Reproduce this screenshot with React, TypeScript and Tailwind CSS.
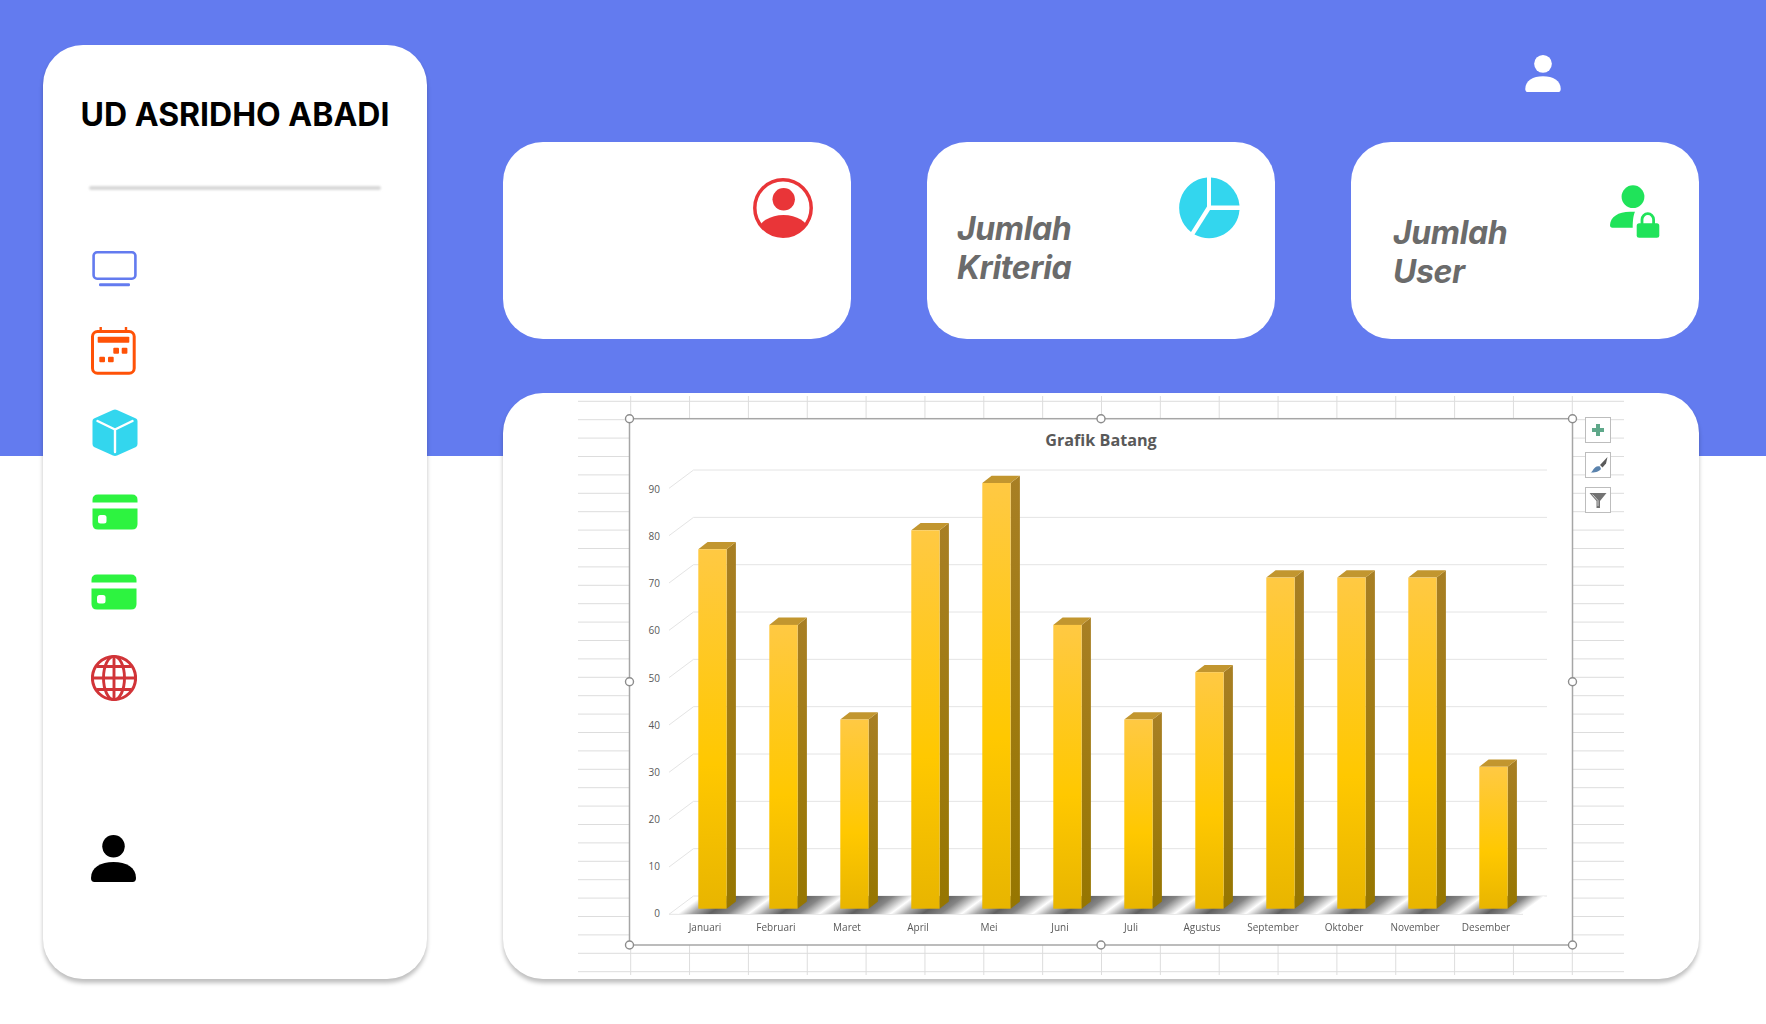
import React from 'react';

const months = [
  { name: 'Januari', value: 76 },
  { name: 'Februari', value: 60 },
  { name: 'Maret', value: 40 },
  { name: 'April', value: 80 },
  { name: 'Mei', value: 90 },
  { name: 'Juni', value: 60 },
  { name: 'Juli', value: 40 },
  { name: 'Agustus', value: 50 },
  { name: 'September', value: 70 },
  { name: 'Oktober', value: 70 },
  { name: 'November', value: 70 },
  { name: 'Desember', value: 30 },
];

const MonitorIcon = () => (
  <svg width="46" height="36" viewBox="0 0 46 36" fill="none" className="block">
    <rect x="2.600" y="1.300" width="41.800" height="26.400" rx="3.500" stroke="#637bef" strokeWidth="2.600" />
    <rect x="8" y="32.200" width="31" height="3" rx="1.200" fill="#637bef" />
  </svg>
);

const CalendarIcon = () => (
  <svg width="46" height="48" viewBox="0 0 46 48" fill="none" className="block">
    <path d="M9.700 0 v4 M35 0 v4" stroke="#ff5207" strokeWidth="2.400" />
    <rect x="1.500" y="4.500" width="41.700" height="41.700" rx="5" stroke="#ff5207" strokeWidth="3" />
    <rect x="6.700" y="9.700" width="31.600" height="6" rx="0.800" fill="#ff5207" />
    <rect x="22.300" y="20.700" width="5.700" height="6" rx="1" fill="#ff5207" />
    <rect x="30.700" y="20.700" width="5.700" height="6" rx="1" fill="#ff5207" />
    <rect x="8.300" y="29.700" width="5.700" height="5.500" rx="1" fill="#ff5207" />
    <rect x="17" y="29.700" width="5.700" height="5.500" rx="1" fill="#ff5207" />
  </svg>
);

const CubeIcon = () => (
  <svg width="46" height="48" viewBox="0 0 46 48" className="block">
    <path d="M21 1 Q23 0 25 1 L44 9.500 Q45.500 10.200 45.500 12 V35 Q45.500 37 44 38 L25 46.600 Q23 47.500 21 46.600 L2 38 Q0.500 37 0.500 35 V12 Q0.500 10.200 2 9.500 Z" fill="#33d6ee" />
    <path d="M5.500 12 L23 20.500 L40.500 12 M23 20.500 V43" fill="none" stroke="#fff" strokeWidth="2.400" strokeLinecap="round" strokeLinejoin="round" />
  </svg>
);

const CreditCardIcon = () => (
  <svg width="46" height="36" viewBox="0 0 46 36" className="block">
    <path d="M0.500 8.500 V6 Q0.500 0.500 6 0.500 H40 Q45.500 0.500 45.500 6 V8.500 Z" fill="#2df340" />
    <path d="M0.500 14.500 H45.500 V30 Q45.500 35.500 40 35.500 H6 Q0.500 35.500 0.500 30 Z" fill="#2df340" />
    <rect x="6" y="21" width="8.500" height="8.500" rx="2.500" fill="#fff" />
  </svg>
);

const GlobeIcon = () => (
  <svg width="46" height="48" viewBox="0 0 46 48" fill="none" stroke="#d13438" strokeWidth="2.900" className="block">
    <circle cx="23" cy="24" r="21.600" strokeWidth="3" />
    <ellipse cx="23" cy="24" rx="10.500" ry="21.600" />
    <path d="M23 2.400 V45.600 M1.400 24 H44.600 M5.500 12.500 H40.500 M5.500 35.500 H40.500" />
  </svg>
);

const PersonIcon = ({ color, width, height }: { color: string; width: number; height: number }) => (
  <svg width={width} height={height} viewBox="0 0 46 48" className="block">
    <circle cx="23" cy="11.500" r="11.500" fill={color} />
    <path d="M0 44 C0 33 10 27.500 23 27.500 C36 27.500 46 33 46 44 Q46 48 42.500 48 H3.500 Q0 48 0 44 Z" fill={color} />
  </svg>
);

const UserCircleIcon = () => (
  <svg width="60" height="60" viewBox="0 0 60 60" className="block">
    <defs>
      <clipPath id="ring">
        <circle cx="30" cy="30" r="28" />
      </clipPath>
    </defs>
    <circle cx="30" cy="30" r="28.200" fill="#fff" stroke="#e93538" strokeWidth="3.500" />
    <circle cx="30.700" cy="21.300" r="11.200" fill="#e93538" />
    <ellipse cx="30.500" cy="52" rx="24.500" ry="15" fill="#e93538" clipPath="url(#ring)" />
  </svg>
);

const PieIcon = () => (
  <svg width="62" height="62" viewBox="0 0 62 62" className="block">
    <path d="M29 0.500 V29.500 L13 55 A30.500 30.500 0 0 1 29 0.500 Z" fill="#33d6ee" />
    <path d="M33 0.500 A30.500 30.500 0 0 1 61.500 28.500 H33 Z" fill="#33d6ee" />
    <path d="M32 33 H61.500 A30.500 30.500 0 0 1 16.500 57.500 Z" fill="#33d6ee" />
  </svg>
);

const UserLockIcon = () => (
  <svg width="50" height="54" viewBox="0 0 50 54" className="block">
    <circle cx="23" cy="11.700" r="11.400" fill="#20e35a" />
    <path d="M0 40 C0.500 32 8 26.700 20 26.700 H25 C23.500 30 22.700 35 22.700 42.700 H2.500 Q0 42.700 0 40 Z" fill="#20e35a" />
    <path d="M32 39 V34.500 A5.800 5.800 0 0 1 43.600 34.500 V39" fill="none" stroke="#20e35a" strokeWidth="2.800" />
    <rect x="26.700" y="38.300" width="22.600" height="14.400" rx="2.500" fill="#20e35a" />
  </svg>
);

const frontTop = (value: number) => 908.7 - value * 4.73;

const ChartPicture = () => {
  const gridRows = Array.from({ length: 32 }, (_, i) => 401.3 + i * 18.4);
  const gridCols = Array.from({ length: 17 }, (_, i) => 630.7 + i * 58.85);
  const ticks = Array.from({ length: 10 }, (_, i) => i);

  return (
    <svg width="1196" height="586" viewBox="503 393 1196 586" className="block blur-[0.4px]" fontFamily="'Open Sans', sans-serif">
      <defs>
        <linearGradient id="front" x1="0" y1="0" x2="0" y2="1">
          <stop offset="0" stopColor="#ffc943" />
          <stop offset="0.6" stopColor="#ffc800" />
          <stop offset="1" stopColor="#e8b500" />
        </linearGradient>
        <linearGradient id="side" x1="0" y1="0" x2="0" y2="1">
          <stop offset="0" stopColor="#a87f24" />
          <stop offset="1" stopColor="#967600" />
        </linearGradient>
        <linearGradient id="floorShadow" x1="0" y1="0" x2="1" y2="0">
          <stop offset="0" stopColor="#ffffff" />
          <stop offset="0.2" stopColor="#a8a8a8" />
          <stop offset="0.45" stopColor="#606060" />
          <stop offset="0.7" stopColor="#858585" />
          <stop offset="1" stopColor="#ffffff" />
        </linearGradient>
      </defs>

      {/* sheet behind the chart */}
      {gridRows.map((y) => (
        <line key={y} x1="578" x2="1624" y1={y} y2={y} stroke="#dddddd" strokeWidth="1" />
      ))}
      {gridCols.map((x) => (
        <line key={x} x1={x} x2={x} y1="396" y2="975" stroke="#dddddd" strokeWidth="1" />
      ))}

      <rect x="629.500" y="418.700" width="943" height="526.300" fill="#fff" stroke="#a6a6a6" strokeWidth="1.500" />

      <text x="1101" y="445.500" textAnchor="middle" fontSize="16.200" fontWeight="700" fill="#595959">Grafik Batang</text>

      {ticks.map((t) => {
        const back = 896 - t * 47.33;
        return (
          <g key={t}>
            {t > 0 && <path d={`M669 ${back + 18.300} L693.500 ${back} H1547`} fill="none" stroke="#e4e4e4" strokeWidth="1" />}
            <text x="660" y={917 - t * 47.1} textAnchor="end" fontSize="10" fill="#595959">{t * 10}</text>
          </g>
        );
      })}

      {/* floor */}
      <path d="M669 914.300 L693.500 896 H1547" fill="none" stroke="#e4e4e4" strokeWidth="1" />
      <path d="M669 914.300 H1523" fill="none" stroke="#e4e4e4" strokeWidth="1" />
      {months.map((m, i) => {
        const x = 698.300 + i * 71;
        return (
          <g key={m.name} transform={`translate(${x - 21} 914) skewX(-53.700)`}>
            <rect x="0" y="-18" width={i === 11 ? 62 : 71} height="18" fill="url(#floorShadow)" />
          </g>
        );
      })}

      {months.map((m, i) => {
        const x = 698.300 + i * 71;
        const top = frontTop(m.value);
        return (
          <g key={m.name}>
            <path d={`M${x + 28.300} ${top} L${x + 37.600} ${top - 7.300} V901.400 L${x + 28.300} 908.700 Z`} fill="url(#side)" />
            <path d={`M${x} ${top} L${x + 9.300} ${top - 7.300} H${x + 37.600} L${x + 28.300} ${top} Z`} fill="#c2962f" />
            <rect x={x} y={top} width="28.300" height={908.700 - top} fill="url(#front)" />
            <text x={705 + i * 71} y="930.500" textAnchor="middle" fontSize="10" fill="#595959">{m.name}</text>
          </g>
        );
      })}

      {/* selection handles */}
      {[
        [629.500, 418.700], [1101, 418.700], [1572.500, 418.700],
        [629.500, 681.800], [1572.500, 681.800],
        [629.500, 945], [1101, 945], [1572.500, 945],
      ].map(([cx, cy]) => (
        <circle key={`${cx}-${cy}`} cx={cx} cy={cy} r="4" fill="#fff" stroke="#8c8c8c" strokeWidth="1.400" />
      ))}

      {/* chart side buttons */}
      <rect x="1585.500" y="417.500" width="25" height="25" fill="#fff" stroke="#bdbdbd" />
      <path d="M1598 424 V436 M1592 430 H1604" stroke="#5fa88a" strokeWidth="4" />
      <rect x="1585.500" y="452.500" width="25" height="25" fill="#fff" stroke="#bdbdbd" />
      <path d="M1600 465 L1607.500 457 L1606 463.500 L1602.500 467.500 Z" fill="#5a5a5a" />
      <path d="M1590.500 472.500 C1593 472 1594 464.500 1600 466.500 L1601 469 C1599 472 1594 472.500 1590.500 472.500 Z" fill="#5a83ad" />
      <rect x="1585.500" y="487.500" width="25" height="25" fill="#fff" stroke="#bdbdbd" />
      <path d="M1589.500 493 H1606.500 L1600 501 V508 H1596.500 V501 Z" fill="#737373" />
      <path d="M1592.500 494.500 L1598 500.500 V506" fill="none" stroke="#d0d0d0" strokeWidth="1" />
    </svg>
  );
};

const StatCard = ({ children }: { children: React.ReactNode }) => (
  <div className="relative w-[348px] h-[197px] bg-white rounded-[40px]">{children}</div>
);

export default function App() {
  return (
    <div className="w-full h-[1024px] overflow-hidden flex pl-[43px] pt-[45px] bg-[linear-gradient(#637bef_456px,#ffffff_456px)] font-['Inter',sans-serif]">
      <aside className="w-[384px] h-[934px] bg-white rounded-[40px] shadow-[0_4px_4px_rgba(0,0,0,0.25)] flex flex-col shrink-0">
        <h1 className="mt-[48px] text-center text-[32px] leading-[44px] font-bold text-black whitespace-nowrap">UD ASRIDHO ABADI</h1>
        <div className="mt-[49px] mx-[46px] h-[4px] rounded-full bg-[#d8d8d8] blur-[1px]" />
        <nav className="pl-[48px] flex flex-col">
          <div className="mt-[61px]"><MonitorIcon /></div>
          <div className="mt-[40px]"><CalendarIcon /></div>
          <div className="mt-[34px] ml-[1px]"><CubeIcon /></div>
          <div className="mt-[37px] ml-[1px]"><CreditCardIcon /></div>
          <div className="mt-[44px]"><CreditCardIcon /></div>
          <div className="mt-[44px]"><GlobeIcon /></div>
          <div className="mt-[133px]"><PersonIcon color="#000000" width={45} height={47} /></div>
        </nav>
      </aside>

      <main className="ml-[76px] w-[1196px] shrink-0 flex flex-col">
        <div className="h-[97px] flex justify-end pr-[138px] pt-[10px]">
          <PersonIcon color="#ffffff" width={36} height={37} />
        </div>

        <div className="flex justify-between">
          <StatCard>
            <div className="absolute left-[250px] top-[36px]"><UserCircleIcon /></div>
          </StatCard>
          <StatCard>
            <p className="absolute left-[30px] top-[68px] text-[32px] leading-[38.500px] font-bold italic tracking-[-0.4px] text-[#6b6b6b]">Jumlah<br />Kriteria</p>
            <div className="absolute left-[251px] top-[35px]"><PieIcon /></div>
          </StatCard>
          <StatCard>
            <p className="absolute left-[42px] top-[72px] text-[32px] leading-[38.500px] font-bold italic tracking-[-0.4px] text-[#6b6b6b]">Jumlah<br />User</p>
            <div className="absolute left-[259px] top-[43px]"><UserLockIcon /></div>
          </StatCard>
        </div>

        <div className="mt-[54px] h-[586px] bg-white rounded-[40px] shadow-[0_4px_4px_rgba(0,0,0,0.25)] overflow-hidden">
          <ChartPicture />
        </div>
      </main>
    </div>
  );
}
